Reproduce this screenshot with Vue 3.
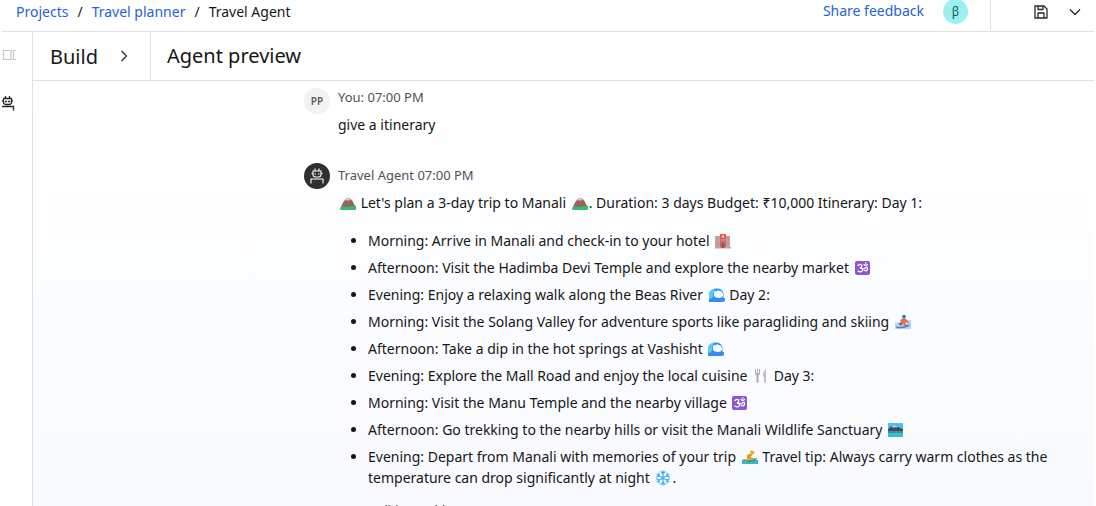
<script setup>
const intro = [
  { icon: 'mountain' },
  " Let's plan a 3-day trip to Manali ",
  { icon: 'mountain' },
  '. Duration: 3 days Budget: ₹10,000 Itinerary: Day 1:'
]

const steps = [
  ['Morning: Arrive in Manali and check-in to your hotel ', { icon: 'hotel' }],
  ['Afternoon: Visit the Hadimba Devi Temple and explore the nearby market ', { icon: 'om' }],
  ['Evening: Enjoy a relaxing walk along the Beas River ', { icon: 'wave' }, ' Day 2:'],
  ['Morning: Visit the Solang Valley for adventure sports like paragliding and skiing ', { icon: 'snowboard' }],
  ['Afternoon: Take a dip in the hot springs at Vashisht ', { icon: 'wave' }],
  ['Evening: Explore the Mall Road and enjoy the local cuisine ', { icon: 'cutlery' }, ' Day 3:'],
  ['Morning: Visit the Manu Temple and the nearby village ', { icon: 'om' }],
  ['Afternoon: Go trekking to the nearby hills or visit the Manali Wildlife Sanctuary ', { icon: 'park' }],
  [
    'Evening: Depart from Manali with memories of your trip ',
    { icon: 'rowing' },
    ' Travel tip: Always carry warm clothes as the temperature can drop significantly at night ',
    { icon: 'snowflake' },
    '.'
  ]
]
</script>

<template>
  <div class="page">
    <svg class="sprite" aria-hidden="true">
      <symbol id="mountain" viewBox="0 0 16 16">
        <path d="M1 12 L2.500 8.500 Q5.500 3 8 3 Q11 3 13 7 L15.500 12 Z" fill="#966558" />
        <path d="M4.500 6 Q6.500 2.500 8 2.500 Q10 3 11 5.500 L9.500 5 L8 6 L6.500 5 Z" fill="#d3c6c8" />
        <path d="M0 14 Q0 11 4 11.500 Q10 12.500 16 10.500 V14 Q16 15 15 15 H1 Q0 15 0 14 Z" fill="#2fbd70" />
      </symbol>
      <symbol id="hotel" viewBox="0 0 16 16">
        <path d="M0 3 H5 V1 H11 V3 H15 V15 H0 Z" fill="#ee9479" />
        <path d="M5 1 H11 V15 H5 Z" fill="#e4604f" />
        <path d="M0 14 H16 V15.500 H0 Z" fill="#b9a3a6" />
        <path d="M1.500 5 H4 V7 H1.500 Z M1.500 9 H4 V12 H1.500 Z M12 5 H14 V7 H12 Z M12 9 H14 V12 H12 Z M6 6 H7.500 V8 H6 Z M8.500 6 H10 V8 H8.500 Z" fill="#62b5e5" />
        <path d="M6.500 10 H9.500 V15 H6.500 Z" fill="#8a5768" />
        <path d="M7 2.500 H9 V4.500 H7 Z" fill="#ffd7cc" />
      </symbol>
      <symbol id="om" viewBox="0 0 16 16">
        <rect x="0" y="1" width="15" height="14" rx="2" fill="#8b55d6" />
        <path d="M3 5.500 Q5 3.500 6.500 5 Q7.500 7 5 8 Q8 8 7.500 10.500 Q6 13 3 11 M7.500 8.500 Q10 9.500 10.500 7.500 Q12.500 6.500 12.500 9 Q12 11.500 9.500 10.500 M9 4.500 Q10.500 6 12.500 4.500" fill="none" stroke="#fff" stroke-width="1.300" stroke-linecap="round" />
        <circle cx="10.800" cy="3" r=".800" fill="#fff" />
      </symbol>
      <symbol id="wave" viewBox="0 0 16 16">
        <path d="M0 15 V7 Q1 2 7 1.500 Q13 1 14.500 6 V11 H16 V13 Q16 15 14 15 Z" fill="#318ff0" />
        <path d="M0 10 V7 Q1 2 7 1.500 Q3 5 4.500 9 Q3 12 0 12 Z" fill="#5fc9f8" />
        <path d="M5 5 Q6 3.500 7.500 4.500 Q9 2.500 10.500 4 Q13.500 3.500 13.500 6 Q15 7 14 9 Q13 11 10 11 Q6 11 5 8.500 Z" fill="#f2fbff" />
      </symbol>
      <symbol id="snowboard" viewBox="0 0 16 16">
        <path d="M0 9 L16 6 V15 H0 Z" fill="#a5dcf5" />
        <circle cx="9" cy="2.800" r="2" fill="#2f7fc6" />
        <path d="M5 6 L8 4.500 L11 5 L14 8 L12.500 9 L10.500 7.500 L10 9 L12 12 H10 L8 10 L5 12 L4 11 L6.500 8.500 Z" fill="#e9694a" />
        <path d="M4 9 L7 8.500 L7 10 L5 11.500 Z" fill="#4b6a9f" />
        <path d="M1 12.500 Q7 14 14 10.500 L14.500 12 Q8 15 1.500 14 Z" fill="#7b62b8" />
      </symbol>
      <symbol id="cutlery" viewBox="0 0 16 16">
        <path d="M2 1 V5 Q2 7 3.500 7.500 V14 Q4.500 16 5.500 14 V7.500 Q7 7 7 5 V1 H6 V5 H5 V1 H4 V5 H3 V1 Z" fill="#b4abb9" />
        <path d="M13 1 Q10 3 10 8 L11 9 V14 Q12 16 13 14 Z" fill="#c3bcc8" />
      </symbol>
      <symbol id="park" viewBox="0 0 16 16">
        <rect x="0" y="1" width="15" height="14" rx="1" fill="#43c4f2" />
        <path d="M0 7 L4 4 L7 3 L12 6 L15 7 V10 H0 Z" fill="#454664" />
        <path d="M4 4 L7 3 L10 5 L8 5.500 L6.500 5 L5 6 Z" fill="#c9d3e6" />
        <path d="M0 9 H15 V11 H0 Z" fill="#29a37d" />
        <path d="M0 11 H15 V14 Q15 15 14 15 H1 Q0 15 0 14 Z" fill="#3db4e6" />
      </symbol>
      <symbol id="rowing" viewBox="0 0 16 16">
        <path d="M0 11 H16 V15 H0 Z" fill="#36b3e3" />
        <path d="M1 10 Q8 12 15 8.500 Q14 12.500 10 13 H4 Q2 13 1 10 Z" fill="#37a35b" />
        <circle cx="9.500" cy="3" r="1.800" fill="#f6b62f" />
        <path d="M5 6 L9 4.500 L10 6 L8 8 L12 9.500 L11 11 L5 9.500 Z" fill="#f08b36" />
        <path d="M12.500 2.500 L3 13" stroke="#dba22e" stroke-width="1.200" />
      </symbol>
      <symbol id="snowflake" viewBox="0 0 16 16">
        <path d="M8 1 V15 M1.900 4.500 L14.100 11.500 M14.100 4.500 L1.900 11.500 M6 1.800 L8 3.800 L10 1.800 M6 14.200 L8 12.200 L10 14.200 M1.600 7 L4.400 6 L3.800 3.200 M14.400 7 L11.600 6 L12.200 3.200 M1.600 9 L4.400 10 L3.800 12.800 M14.400 9 L11.600 10 L12.200 12.800" fill="none" stroke="#45aef0" stroke-width="1.300" stroke-linecap="round" />
      </symbol>
    </svg>

    <header class="topbar">
      <nav class="crumbs" aria-label="Breadcrumb">
        <a href="#">Projects</a>
        <span>/</span>
        <a href="#">Travel planner</a>
        <span>/</span>
        <span>Travel Agent</span>
      </nav>
      <a class="feedback" href="#">Share feedback</a>
      <span class="beta">β</span>
      <div class="tools">
        <button type="button" aria-label="Save">
          <svg width="16" height="16" viewBox="0 0 16 16" fill="none" stroke="#262626" stroke-width="1.300">
            <path d="M2 2 H11 L14 5 V14 H2 Z M5 2 V5.500 H10 V2 M5 14 V9 H11 V14" stroke-linejoin="round" />
          </svg>
        </button>
        <button type="button" aria-label="More save options">
          <svg width="16" height="16" viewBox="0 0 16 16" fill="none" stroke="#262626" stroke-width="1.300">
            <path d="M3 5.500 L8 10.500 L13 5.500" />
          </svg>
        </button>
      </div>
    </header>

    <div class="body">
      <aside class="rail">
        <button type="button" aria-label="Toggle panel">
          <svg width="16" height="16" viewBox="0 0 16 16" fill="none" stroke="#c6c6c6" stroke-width="1.200">
            <path d="M1.500 3.500 H9 V12.500 H1.500 Z M14 3.500 H11.500 V12.500 H14" />
          </svg>
        </button>
        <button type="button" aria-label="Agent">
          <svg width="16" height="16" viewBox="0 0 16 16" fill="none" stroke="#262626" stroke-width="1.300">
            <path d="M3.500 1 V3.500 M7.500 1 V3.500 M1.500 3.500 H9.500 V7 Q9.500 9.500 7 9.500 H4 Q1.500 9.500 1.500 7 Z M0 6 H1.500 M9.500 6 H11 M0 11.500 H11.500 V15.500" />
            <path d="M3 6.500 H5 M6 6.500 H8" />
          </svg>
        </button>
      </aside>

      <main class="main">
        <div class="titles">
          <button type="button" class="build">
            Build
            <svg width="16" height="16" viewBox="0 0 16 16" fill="none" stroke="#262626" stroke-width="1.200">
              <path d="M5.500 3 L10.500 8 L5.500 13" />
            </svg>
          </button>
          <h1>Agent preview</h1>
        </div>

        <section class="chat">
          <article class="message">
            <span class="avatar user">PP</span>
            <div>
              <div class="meta">You: 07:00 PM</div>
              <p>give a itinerary</p>
            </div>
          </article>

          <article class="message">
            <span class="avatar agent">
              <svg width="16" height="16" viewBox="0 0 16 16" fill="none" stroke="#fff" stroke-width="1.100">
                <path d="M6 0.500 V3 M10 0.500 V3 M4 3 H12 V6.500 Q12 9 9.500 9 H6.500 Q4 9 4 6.500 Z M2.500 5.500 H4 M12 5.500 H13.500 M2 15.500 V11 H14 V15.500" />
                <path d="M5.500 6 H7 M9 6 H10.500" />
              </svg>
            </span>
            <div>
              <div class="meta">Travel Agent 07:00 PM</div>
              <p>
                <template v-for="(part, i) in intro" :key="i"><svg v-if="part.icon" class="emoji" aria-hidden="true"><use :href="'#' + part.icon" /></svg><template v-else>{{ part }}</template></template>
              </p>
              <ul>
                <li v-for="(step, n) in steps" :key="n">
                  <template v-for="(part, i) in step" :key="i"><svg v-if="part.icon" class="emoji" aria-hidden="true"><use :href="'#' + part.icon" /></svg><template v-else>{{ part }}</template></template>
                </li>
              </ul>
              <button type="button" class="explain">How did I get this answer?</button>
            </div>
          </article>
        </section>
      </main>
    </div>
  </div>
</template>

<style>
body {
  margin: 0;
  background: #fff;
}
</style>

<style scoped>
.page {
  box-sizing: border-box;
  display: flex;
  flex-direction: column;
  height: 100vh;
  padding: 0 2px;
  overflow: hidden;
  font-family: "Noto Sans", "Open Sans", sans-serif;
  font-size: 14px;
  line-height: 21px;
  color: #161616;
}
.sprite {
  position: absolute;
  width: 0;
  height: 0;
}
a {
  color: #1f62d6;
  text-decoration: none;
}
button {
  display: flex;
  padding: 0;
  border: 0;
  background: none;
  font: inherit;
  color: inherit;
  cursor: pointer;
}
.topbar {
  display: flex;
  align-items: center;
  height: 31px;
  flex: none;
  border-bottom: 1px solid #e0e0e0;
}
.crumbs {
  display: flex;
  flex: 1;
  gap: 9px;
  padding: 0 0 8px 14px;
}
.feedback {
  padding-bottom: 10px;
}
.beta {
  width: 25px;
  height: 25px;
  margin: 0 22px 9px 19px;
  border-radius: 50%;
  background: #9ef0f0;
  color: #0b5e5e;
  font-size: 12px;
  line-height: 25px;
  text-align: center;
}
.tools {
  display: flex;
  align-items: center;
  align-self: stretch;
  gap: 18px;
  padding: 0 11px 7px 42px;
  border-left: 1px solid #e0e0e0;
}
.body {
  display: flex;
  flex: 1;
  min-height: 0;
}
.rail {
  display: flex;
  flex-direction: column;
  flex: none;
  gap: 32px;
  width: 30px;
  padding-top: 15px;
  border-right: 1px solid #e0e0e0;
}
.main {
  display: flex;
  flex: 1;
  flex-direction: column;
  min-width: 0;
}
.titles {
  display: flex;
  flex: none;
  height: 48px;
  border-bottom: 1px solid #e0e0e0;
  font-size: 20px;
}
.build {
  align-items: center;
  gap: 18px;
  padding: 0 18px 0 17px;
  border-right: 1px solid #e0e0e0;
}
h1 {
  margin: 0;
  padding-left: 16px;
  font-size: 20px;
  font-weight: 400;
  line-height: 48px;
}
.chat {
  flex: 1;
  min-height: 0;
  padding: 4px 36px 0 271px;
  overflow: hidden;
  background: linear-gradient(#fff, #f8faff);
}
.message {
  display: grid;
  grid-template-columns: 26px 1fr;
  gap: 8px;
}
.message + .message {
  margin-top: 28px;
}
.meta {
  margin-bottom: 5px;
  font-size: 13px;
  line-height: 24px;
  color: #525252;
}
.avatar {
  display: flex;
  align-items: center;
  justify-content: center;
  width: 26px;
  height: 26px;
  border-radius: 50%;
}
.user {
  margin-top: 3px;
  background: #f2f2f2;
  color: #5a5f66;
  font-size: 10px;
  font-weight: 600;
}
.agent {
  background: #303030;
}
p {
  margin: 0;
}
ul {
  display: flex;
  flex-direction: column;
  gap: 6px;
  margin: 17px 0 14px;
  padding-left: 30px;
}
.emoji {
  width: 16px;
  height: 16px;
  margin: 0 1px 0 2px;
  vertical-align: -3px;
}
.explain {
  padding-left: 14px;
  font-size: 12px;
  line-height: 18px;
}
</style>
